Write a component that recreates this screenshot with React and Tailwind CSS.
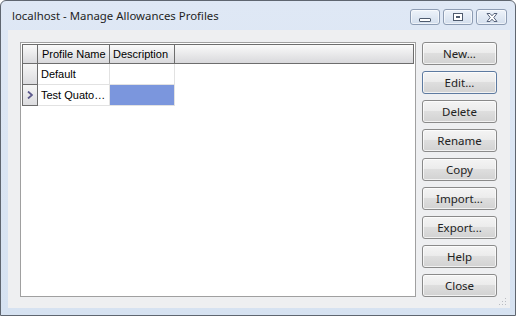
import React from 'react';

const buttons = ['New...', 'Edit...', 'Delete', 'Rename', 'Copy', 'Import...', 'Export...', 'Help', 'Close'];

const CaptionButton = ({ children }) => (
    <div className="flex items-center justify-center h-[16px] rounded-[3px] border border-[#8d9cb3] bg-gradient-to-b from-[#eef3fa] to-[#d3deed] shadow-[inset_0_0_0_1px_rgba(255,255,255,0.6)]">
        {children}
    </div>
);

export default function App() {
    return (
        <div
            className="relative w-[516px] h-[316px] flex flex-col bg-gradient-to-b from-[#dfe8f5] to-[#d6e2f1] border border-[#5f6670] rounded-t-[6px] overflow-hidden"
            style={{ fontFamily: '"Noto Sans", "Liberation Sans", sans-serif' }}
        >
            {/* Title bar */}
            <div className="h-[29px] flex items-center pl-[11px] pr-[8px]">
                <span className="text-[11.4px] text-[#1f1f1f] pt-[1px] whitespace-nowrap">localhost - Manage Allowances Profiles</span>
                <div className="ml-auto flex gap-[3px] mt-[3px] shrink-0">
                    <div className="w-[30px] shrink-0">
                        <CaptionButton>
                            <div className="w-[12px] h-[4px] mt-[5px] rounded-[1px] border border-[#4f5b6e] bg-white"></div>
                        </CaptionButton>
                    </div>
                    <div className="w-[30px] shrink-0">
                        <CaptionButton>
                            <div className="w-[10px] h-[8px] border border-[#4f5b6e] bg-white flex items-center justify-center">
                                <div className="w-[4px] h-[2px] border border-[#4f5b6e]"></div>
                            </div>
                        </CaptionButton>
                    </div>
                    <div className="w-[31px] shrink-0">
                        <CaptionButton>
                            <svg width="14" height="11" viewBox="0 0 14 11">
                                <path d="M2 1.5 L5 1.5 L7 3.8 L9 1.5 L12 1.5 L8.8 5.5 L12 9.5 L9 9.5 L7 7.2 L5 9.5 L2 9.5 L5.2 5.5 Z" fill="#ffffff" stroke="#56627a" strokeWidth="1" strokeLinejoin="round" />
                            </svg>
                        </CaptionButton>
                    </div>
                </div>
            </div>

            {/* Client area */}
            <div className="flex-1 ml-[7px] mr-[5px] mb-[7px] bg-[#eeeff1] flex pt-[12px] pl-[12px] pr-[13px] pb-[11px] gap-[6px]" style={{ fontFamily: '"Liberation Sans", Arial, sans-serif' }}>
                {/* Grid */}
                <div className="w-[396px] h-[255px] border border-[#a0a0a0] bg-white p-[1px]">
                    <div className="flex flex-col text-[11px] text-black">
                        {/* Header */}
                        <div className="flex h-[20px] border border-[#6d6d6d]">
                            <div className="w-[15px] border-r border-[#6d6d6d] bg-gradient-to-b from-[#fafafa] to-[#d9d9dc]"></div>
                            <div className="w-[72px] border-r border-[#6d6d6d] bg-gradient-to-b from-[#fafafa] to-[#d9d9dc] flex items-center pl-[4px]">Profile Name</div>
                            <div className="w-[65px] border-r border-[#6d6d6d] bg-gradient-to-b from-[#fafafa] to-[#d9d9dc] flex items-center pl-[3px]">Description</div>
                            <div className="flex-1 bg-gradient-to-b from-[#fafafa] to-[#d9d9dc]"></div>
                        </div>
                        {/* Row 1 */}
                        <div className="flex h-[21px]">
                            <div className="w-[16px] border-l border-r border-b border-[#6d6d6d] bg-gradient-to-b from-[#f6f6f6] to-[#dcdcdf]"></div>
                            <div className="w-[72px] border-r border-b border-[#e2e2e2] flex items-center pl-[3px]">Default</div>
                            <div className="w-[65px] border-r border-b border-[#e2e2e2]"></div>
                        </div>
                        {/* Row 2 */}
                        <div className="flex h-[21px]">
                            <div className="w-[16px] border-l border-r border-b border-[#6d6d6d] bg-gradient-to-b from-[#f6f6f6] to-[#dcdcdf] flex items-center justify-center">
                                <svg width="6" height="8" viewBox="0 0 6 8">
                                    <path d="M1 0.5 L5 4 L1 7.5" fill="none" stroke="#5d5a8c" strokeWidth="1.8" />
                                </svg>
                            </div>
                            <div className="w-[72px] border-r border-b border-[#e2e2e2] flex items-center pl-[3px] whitespace-nowrap overflow-hidden">Test Quato…</div>
                            <div className="w-[65px] border-r border-b border-[#e2e2e2] bg-[#7b96dd]"></div>
                        </div>
                    </div>
                </div>

                {/* Buttons */}
                <div className="w-[75px] flex flex-col gap-[6px]">
                    {buttons.map((label) => (
                        <div
                            key={label}
                            className={`h-[23px] rounded-[3px] border flex items-center justify-center text-[11.5px] text-[#222222] bg-[linear-gradient(to_bottom,#f4f4f4_0%,#ececec_45%,#dedede_50%,#d2d2d2_100%)] shadow-[inset_0_0_0_1px_rgba(255,255,255,0.7)] ${label === 'Edit...' ? 'border-[#5d7aa0]' : 'border-[#8a8a8a]'}`}
                            style={{ fontFamily: '"Noto Sans", "Liberation Sans", sans-serif' }}
                        >
                            {label}
                        </div>
                    ))}
                </div>
            </div>

            {/* Resize grip */}
            <svg className="absolute right-[8px] bottom-[9px]" width="9" height="9" viewBox="0 0 9 9">
                {[[7, 1], [4, 4], [7, 4], [1, 7], [4, 7], [7, 7]].map(([x, y]) => (
                    <rect key={`${x}-${y}`} x={x} y={y} width="1" height="1" fill="#b9bcc2" />
                ))}
            </svg>
        </div>
    );
}
